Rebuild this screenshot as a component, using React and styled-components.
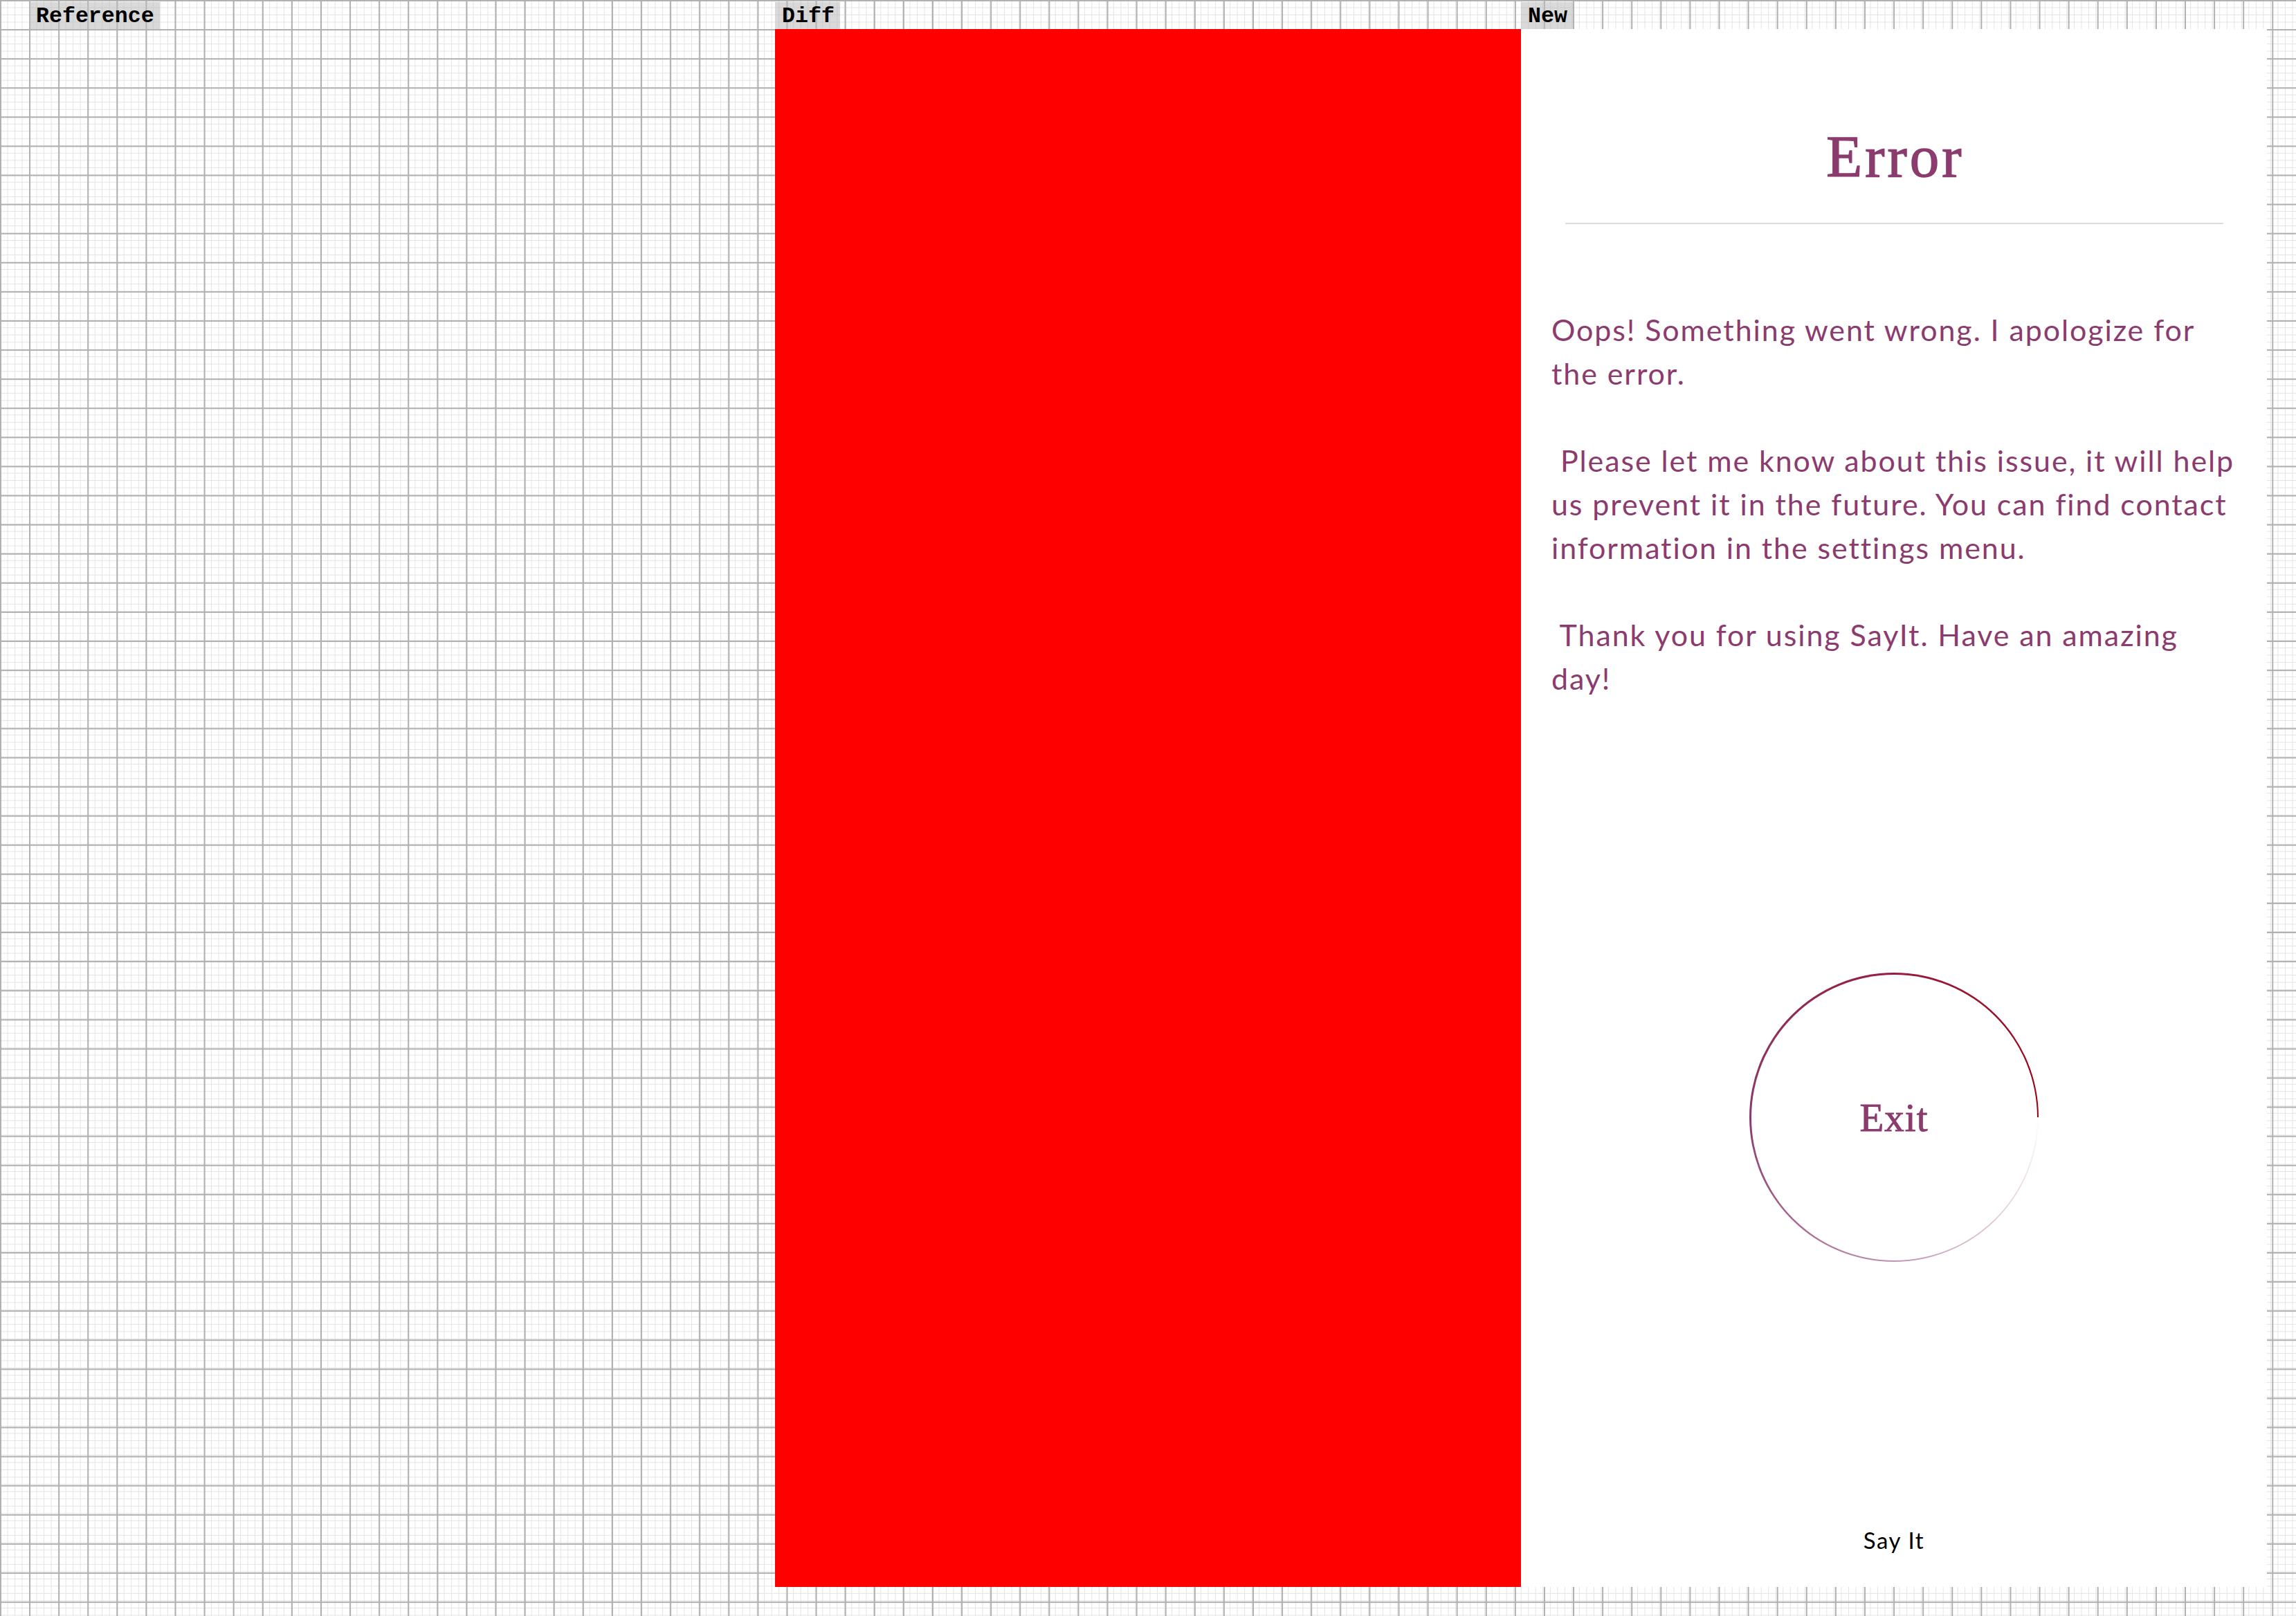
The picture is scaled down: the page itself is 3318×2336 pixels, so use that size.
import React from "react";
import styled, { createGlobalStyle } from "styled-components";

const GlobalStyle = createGlobalStyle`
    html, body {
        margin: 0;
        padding: 0;
    }
    body {
        width: 3318px;
        height: 2336px;
        overflow: hidden;
        background-color: #ffffff;
        background-image:
            linear-gradient(to right, #b0b0b0 0 1.5px, transparent 1.5px),
            linear-gradient(to bottom, #b0b0b0 0 1.5px, transparent 1.5px),
            linear-gradient(to right, #e3e3e3 0 1px, transparent 1px),
            linear-gradient(to bottom, #e3e3e3 0 1px, transparent 1px);
        background-size: 42.105px 42.105px, 42.105px 42.105px, 10.526px 10.526px, 10.526px 10.526px;
    }
`;

const Page = styled.div`
    display: flex;
    padding-left: 42px;
    width: 3318px;
    height: 2336px;
    box-sizing: border-box;
`;

const Column = styled.div`
    display: flex;
    flex-direction: column;
    width: 1078px;
`;

const Label = styled.div`
    align-self: flex-start;
    margin-top: 3px;
    height: 39px;
    padding: 0 8px 0 10px;
    background: rgba(185, 185, 185, 0.55);
    font-family: "Liberation Mono", monospace;
    font-weight: bold;
    font-size: 31.6px;
    line-height: 41px;
    color: #000;
`;

const Panel = styled.div`
    height: 2252px;
    background: ${(p) => p.$bg || "transparent"};
`;

const Screen = styled.div`
    display: flex;
    flex-direction: column;
    align-items: center;
    height: 2252px;
    background: #ffffff;
    color: #8b3b6e;
`;

const Title = styled.h1`
    margin: 142px 0 0;
    font-family: "Liberation Serif", serif;
    font-weight: normal;
    font-size: 85px;
    line-height: 85px;
    letter-spacing: 4px;
    padding-left: 4px;
    -webkit-text-stroke: 1.4px #8b3b6e;
`;

const Divider = styled.div`
    margin-top: 53px;
    width: 951px;
    height: 2px;
    background: #dcdcdc;
`;

const Message = styled.p`
    align-self: stretch;
    margin: 121px 0 0;
    padding: 0 44px;
    font-family: Lato, "Noto Sans", sans-serif;
    font-size: 43px;
    line-height: 63px;
    letter-spacing: 1.9px;
    white-space: pre;
`;

const ExitRing = styled.button`
    margin-top: 394px;
    width: 418px;
    height: 418px;
    padding: 2.5px;
    border: none;
    border-radius: 50%;
    background: conic-gradient(
        from 90deg,
        rgba(139, 59, 110, 0) 0%,
        rgba(139, 59, 110, 0.55) 25%,
        #8b3b6e 50%,
        #a00010 100%
    );
    cursor: pointer;
`;

const ExitFace = styled.span`
    display: flex;
    align-items: center;
    justify-content: center;
    width: 100%;
    height: 100%;
    border-radius: 50%;
    background: #ffffff;
    font-family: "Liberation Serif", serif;
    font-size: 57px;
    letter-spacing: 1px;
    color: #8b3b6e;
    -webkit-text-stroke: 0.9px #8b3b6e;
`;

const Footer = styled.div`
    margin-top: 383px;
    font-family: Lato, "Noto Sans", sans-serif;
    font-size: 33px;
    line-height: 38px;
    letter-spacing: 1.6px;
    color: #000;
`;

const lines = [
    "Oops! Something went wrong. I apologize for",
    "the error.",
    "",
    " Please let me know about this issue, it will help",
    "us prevent it in the future. You can find contact",
    "information in the settings menu.",
    "",
    " Thank you for using SayIt. Have an amazing",
    "day!",
];

const ErrorScreen = () => (
    <Screen>
        <Title>Error</Title>
        <Divider />
        <Message>{lines.join("\n")}</Message>
        <ExitRing>
            <ExitFace>Exit</ExitFace>
        </ExitRing>
        <Footer>Say It</Footer>
    </Screen>
);

const App = () => (
    <>
        <GlobalStyle />
        <Page>
            <Column>
                <Label>Reference</Label>
                <Panel />
            </Column>
            <Column>
                <Label>Diff</Label>
                <Panel $bg="#ff0000" />
            </Column>
            <Column>
                <Label>New</Label>
                <ErrorScreen />
            </Column>
        </Page>
    </>
);

export default App;
